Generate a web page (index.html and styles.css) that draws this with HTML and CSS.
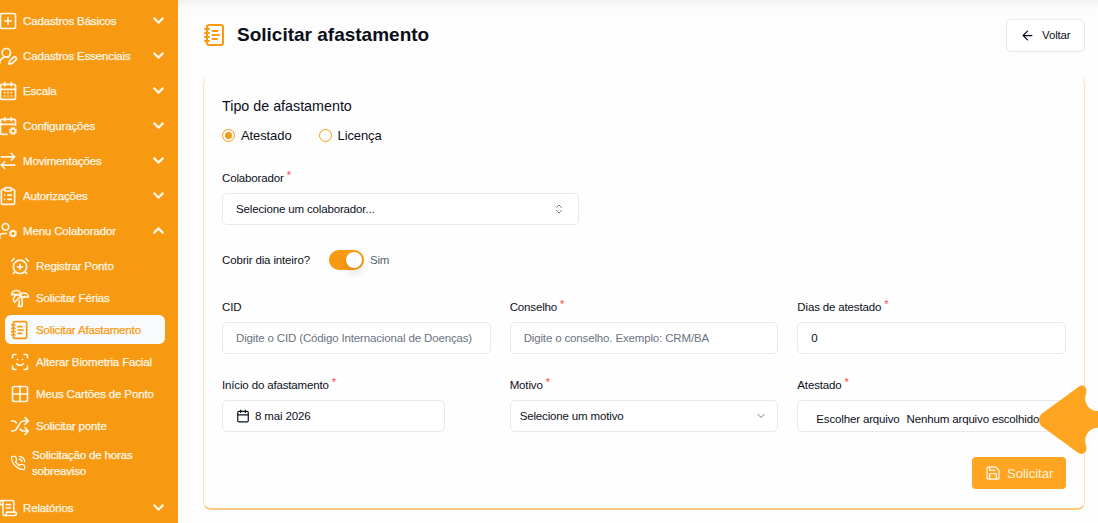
FILE: index.html
```html
<!DOCTYPE html>
<html lang="pt-BR">
<head>
  <meta charset="UTF-8" />
  <meta name="viewport" content="width=device-width, initial-scale=1.0"/>
  <title>Solicitar afastamento</title>
  <link rel="stylesheet" href="styles.css">
</head>
<body>

  <!-- Menu lateral -->
  <nav class="sidebar">
    <a class="menu-item">
      <svg class="icon" viewBox="0 0 24 24"><rect x="3" y="3" width="18" height="18" rx="2"/><path d="M8 12h8M12 8v8"/></svg>
      <span>Cadastros Básicos</span>
      <svg class="chevron" viewBox="0 0 24 24"><path d="m6 9 6 6 6-6"/></svg>
    </a>
    <a class="menu-item">
      <svg class="icon" viewBox="0 0 24 24"><path d="M2 21a8 8 0 0 1 10.821-7.487"/><path d="M21.378 16.626a1 1 0 0 0-3.004-3.004l-4.01 4.012a2 2 0 0 0-.506.854l-.837 2.87a.5.5 0 0 0 .62.62l2.87-.837a2 2 0 0 0 .854-.506z"/><circle cx="10" cy="8" r="5"/></svg>
      <span>Cadastros Essenciais</span>
      <svg class="chevron" viewBox="0 0 24 24"><path d="m6 9 6 6 6-6"/></svg>
    </a>
    <a class="menu-item">
      <svg class="icon" viewBox="0 0 24 24"><path d="M8 2v4M16 2v4"/><rect x="3" y="4" width="18" height="18" rx="2"/><path d="M3 10h18M8 14h.01M12 14h.01M16 14h.01M8 18h.01M12 18h.01M16 18h.01"/></svg>
      <span>Escala</span>
      <svg class="chevron" viewBox="0 0 24 24"><path d="m6 9 6 6 6-6"/></svg>
    </a>
    <a class="menu-item">
      <svg class="icon" viewBox="0 0 24 24"><path d="M8 2v4M16 2v4M3 10h18M21 11V6a2 2 0 0 0-2-2H5a2 2 0 0 0-2 2v14a2 2 0 0 0 2 2h6"/><circle cx="18" cy="18" r="3"/><path d="m15.2 16.9-.9-.4M15.2 19.1l-.9.3M16.9 15.2l-.4-.9M16.9 20.8l-.3.9M19.1 15.2l.3-.9M19.5 21.7l-.4-.9M20.8 16.9l.9-.4M21.7 19.5l-.9-.4"/></svg>
      <span>Configurações</span>
      <svg class="chevron" viewBox="0 0 24 24"><path d="m6 9 6 6 6-6"/></svg>
    </a>
    <a class="menu-item">
      <svg class="icon" viewBox="0 0 24 24"><path d="m16 3 4 4-4 4M20 7H4M8 21l-4-4 4-4M4 17h16"/></svg>
      <span>Movimentações</span>
      <svg class="chevron" viewBox="0 0 24 24"><path d="m6 9 6 6 6-6"/></svg>
    </a>
    <a class="menu-item">
      <svg class="icon" viewBox="0 0 24 24"><rect x="8" y="2" width="8" height="4" rx="1"/><path d="M16 4h2a2 2 0 0 1 2 2v14a2 2 0 0 1-2 2H6a2 2 0 0 1-2-2V6a2 2 0 0 1 2-2h2M12 11h4M12 16h4M8 11h.01M8 16h.01"/></svg>
      <span>Autorizações</span>
      <svg class="chevron" viewBox="0 0 24 24"><path d="m6 9 6 6 6-6"/></svg>
    </a>
    <a class="menu-item">
      <svg class="icon" viewBox="0 0 24 24"><circle cx="18" cy="15" r="3"/><circle cx="9" cy="7" r="4"/><path d="M10 15H6a4 4 0 0 0-4 4v2M21.7 16.4l-.9-.3M15.2 13.9l-.9-.3M16.6 18.7l.3-.9M19.1 12.2l.3-.9M19.6 18.7l-.4-1M16.8 12.3l-.4-1M14.3 16.6l1-.4M20.7 13.8l1-.4"/></svg>
      <span>Menu Colaborador</span>
      <svg class="chevron" viewBox="0 0 24 24"><path d="m18 15-6-6-6 6"/></svg>
    </a>

    <div class="submenu">
      <a class="submenu-item">
        <svg class="icon" viewBox="0 0 24 24"><circle cx="12" cy="13" r="8"/><path d="M5 3 2 6M22 6l-3-3M6.38 18.7 4 21M17.64 18.67 20 21M12 10v6M9 13h6"/></svg>
        <span>Registrar Ponto</span>
      </a>
      <a class="submenu-item">
        <svg class="icon" viewBox="0 0 24 24"><path d="M13 8c0-2.76-2.46-5-5.5-5S2 5.24 2 8h2l1-1 1 1h4"/><path d="M13 7.14A5.82 5.82 0 0 1 16.5 6c3.04 0 5.5 2.24 5.5 5h-3l-1-1-1 1h-3"/><path d="M5.89 9.71c-2.15 2.15-2.3 5.47-.35 7.43l4.24-4.25.7-.7.71-.71 2.12-2.12c-1.95-1.96-5.27-1.8-7.42.35"/><path d="M11 15.5c.5 2.5-.17 4.5-1 6.5h4c2-5.5-.5-12-1-14"/></svg>
        <span>Solicitar Férias</span>
      </a>
      <a class="submenu-item active">
        <svg class="icon" viewBox="0 0 24 24"><path d="M2 6h4M2 10h4M2 14h4M2 18h4"/><rect x="4" y="2" width="16" height="20" rx="2"/><path d="M9.5 8h5M9.5 12H16M9.5 16H14"/></svg>
        <span>Solicitar Afastamento</span>
      </a>
      <a class="submenu-item">
        <svg class="icon" viewBox="0 0 24 24"><path d="M3 7V5a2 2 0 0 1 2-2h2M17 3h2a2 2 0 0 1 2 2v2M21 17v2a2 2 0 0 1-2 2h-2M7 21H5a2 2 0 0 1-2-2v-2M8 14s1.5 2 4 2 4-2 4-2M9 9h.01M15 9h.01"/></svg>
        <span>Alterar Biometria Facial</span>
      </a>
      <a class="submenu-item">
        <svg class="icon" viewBox="0 0 24 24"><rect x="3" y="3" width="18" height="18" rx="2"/><path d="M12 3v18M3 12h18"/></svg>
        <span>Meus Cartões de Ponto</span>
      </a>
      <a class="submenu-item">
        <svg class="icon" viewBox="0 0 24 24"><path d="m18 14 4 4-4 4M18 2l4 4-4 4M2 18h1.973a4 4 0 0 0 3.3-1.7l5.454-8.6a4 4 0 0 1 3.3-1.7H22M2 6h1.972a4 4 0 0 1 3.6 2.2M22 18h-6.041a4 4 0 0 1-3.3-1.8l-.359-.45"/></svg>
        <span>Solicitar ponte</span>
      </a>
      <a class="submenu-item tall">
        <svg class="icon small" viewBox="0 0 24 24"><path d="M22 16.92v3a2 2 0 0 1-2.18 2 19.79 19.79 0 0 1-8.63-3.07 19.5 19.5 0 0 1-6-6 19.79 19.79 0 0 1-3.07-8.67A2 2 0 0 1 4.11 2h3a2 2 0 0 1 2 1.72 12.84 12.84 0 0 0 .7 2.81 2 2 0 0 1-.45 2.11L8.09 9.91a16 16 0 0 0 6 6l1.27-1.27a2 2 0 0 1 2.11-.45 12.84 12.84 0 0 0 2.81.7A2 2 0 0 1 22 16.92zM14.05 2a9 9 0 0 1 8 7.94M14.05 6A5 5 0 0 1 18 10"/></svg>
        <span>Solicitação de horas<br>sobreaviso</span>
      </a>
    </div>

    <a class="menu-item">
      <svg class="icon" viewBox="0 0 24 24"><path d="M15 12h-5M15 8h-5M19 17V5a2 2 0 0 0-2-2H4"/><path d="M8 21h12a2 2 0 0 0 2-2v-1a1 1 0 0 0-1-1H11a1 1 0 0 0-1 1v1a2 2 0 1 1-4 0V5a2 2 0 1 0-4 0v2a1 1 0 0 0 1 1h3"/></svg>
      <span>Relatórios</span>
      <svg class="chevron" viewBox="0 0 24 24"><path d="m6 9 6 6 6-6"/></svg>
    </a>
  </nav>

  <main>
    <header class="page-header">
      <svg class="title-icon" viewBox="0 0 24 24"><path d="M2 6h4M2 10h4M2 14h4M2 18h4"/><rect x="4" y="2" width="16" height="20" rx="2"/><path d="M9.5 8h5M9.5 12H16M9.5 16H14"/></svg>
      <h1>Solicitar afastamento</h1>
      <button class="back-button">
        <svg viewBox="0 0 24 24"><path d="m12 19-7-7 7-7M19 12H5"/></svg>
        <span>Voltar</span>
      </button>
    </header>

    <form class="card">
      <h2>Tipo de afastamento</h2>
      <div class="radio-group">
        <label class="radio"><i class="dot checked"></i><span>Atestado</span></label>
        <label class="radio"><i class="dot"></i><span>Licença</span></label>
      </div>

      <div class="field employee">
        <label class="label"><span>Colaborador</span><sup>*</sup></label>
        <div class="control">
          <span>Selecione um colaborador...</span>
          <svg class="arrow" viewBox="0 0 24 24"><path d="m7 15 5 5 5-5M7 9l5-5 5 5"/></svg>
        </div>
      </div>

      <div class="switch-row">
        <span>Cobrir dia inteiro?</span>
        <i class="switch"></i>
        <span class="switch-value">Sim</span>
      </div>

      <div class="grid">
        <div class="field">
          <label class="label"><span>CID</span></label>
          <div class="control placeholder"><span>Digite o CID (Código Internacional de Doenças)</span></div>
        </div>
        <div class="field">
          <label class="label"><span>Conselho</span><sup>*</sup></label>
          <div class="control placeholder"><span>Digite o conselho. Exemplo: CRM/BA</span></div>
        </div>
        <div class="field">
          <label class="label"><span>Dias de atestado</span><sup>*</sup></label>
          <div class="control"><span>0</span></div>
        </div>
        <div class="field">
          <label class="label"><span>Início do afastamento</span><sup>*</sup></label>
          <div class="control date">
            <svg viewBox="0 0 24 24"><path d="M8 2v4M16 2v4"/><rect x="3" y="4" width="18" height="18" rx="2"/><path d="M3 10h18"/></svg>
            <span>8 mai 2026</span>
          </div>
        </div>
        <div class="field">
          <label class="label"><span>Motivo</span><sup>*</sup></label>
          <div class="control select">
            <span>Selecione um motivo</span>
            <svg class="arrow" viewBox="0 0 24 24"><path d="m6 9 6 6 6-6"/></svg>
          </div>
        </div>
        <div class="field">
          <label class="label"><span>Atestado</span><sup>*</sup></label>
          <div class="control file">
            <span>Escolher arquivo</span>
            <span class="file-name">Nenhum arquivo escolhido</span>
          </div>
        </div>
      </div>

      <div class="actions">
        <button type="button" class="submit-button">
          <svg viewBox="0 0 24 24"><path d="M15.2 3a2 2 0 0 1 1.4.6l3.8 3.8a2 2 0 0 1 .6 1.4V19a2 2 0 0 1-2 2H5a2 2 0 0 1-2-2V5a2 2 0 0 1 2-2z"/><path d="M17 21v-7a1 1 0 0 0-1-1H8a1 1 0 0 0-1 1v7M7 3v4a1 1 0 0 0 1 1h7"/></svg>
          <span>Solicitar</span>
        </button>
      </div>
    </form>
  </main>

  <!-- Botão flutuante na borda direita -->
  <svg class="floating-tab" viewBox="0 0 60 70" preserveAspectRatio="none"><path d="M3 29 40 3C45-1 50 3 48 9C45 18 51 26 60 26V42C51 42 45 50 48 59C50 65 45 69 40 66L3 40Q-1 34.5 3 29Z"/></svg>

</body>
</html>
```
FILE: styles.css
```css
:root {
  --primary-color: #f79a12;
  --button-color: #ffa521;
  --border-color: #e7e8ec;
  --text-color: #0c0f1a;
}
* {
  box-sizing: border-box;
}
body {
  margin: 0;
  height: 523px;
  display: flex;
  overflow: hidden;
  position: relative;
  background: #fdfdfd;
  color: var(--text-color);
  font-family: "Liberation Sans", Arial, sans-serif;
  font-size: 11.5px;
  letter-spacing: -0.15px;
}
svg {
  fill: none;
  stroke: currentColor;
  stroke-width: 2;
  stroke-linecap: round;
  stroke-linejoin: round;
  flex: none;
}
span {
  white-space: nowrap;
}
button {
  font-family: inherit;
  letter-spacing: inherit;
}

/* menu lateral */
.sidebar {
  width: 178px;
  flex: none;
  padding-top: 3px;
  background: var(--primary-color);
  color: #fff6e8;
  -webkit-text-stroke: 0.25px;
}
.menu-item {
  display: flex;
  align-items: center;
  height: 35px;
  padding-right: 11px;
}
.menu-item .icon {
  width: 20px;
  height: 20px;
  margin: 1px 5px 0 -2px;
}
.chevron {
  width: 17px;
  height: 17px;
  margin-left: auto;
  stroke-width: 3;
}
.submenu {
  padding: 2px 13px 6px 5px;
}
.submenu-item {
  display: flex;
  align-items: center;
  height: 32px;
  padding-left: 5px;
}
.submenu-item .icon {
  width: 20px;
  height: 20px;
  margin-right: 6px;
}
.submenu-item.active {
  height: 29px;
  margin: 1px 0 2px;
  border-radius: 6px;
  background: #f9fafb;
  color: var(--primary-color);
}
.submenu-item.tall {
  height: 42px;
  line-height: 16px;
}
.submenu-item .icon.small {
  width: 16px;
  height: 16px;
  margin-right: 6px;
}

/* conteúdo */
main {
  flex: 1;
  min-width: 0;
  padding: 17px 13px 0 25px;
  background: linear-gradient(#f1f1f1, #fdfdfd 9px);
}
.page-header {
  display: flex;
  align-items: center;
  height: 36px;
}
.title-icon {
  width: 24px;
  height: 24px;
  color: var(--primary-color);
}
h1 {
  margin: 0 0 0 10px;
  font-size: 19px;
  letter-spacing: 0;
}
.back-button {
  display: flex;
  align-items: center;
  width: 79px;
  height: 33px;
  margin-left: auto;
  padding: 0 0 0 13px;
  border: 1px solid var(--border-color);
  border-radius: 5px;
  background: #fff;
  color: var(--text-color);
  font-size: 11.5px;
}
.back-button svg {
  width: 15px;
  height: 15px;
  margin-right: 7px;
}
.card {
  height: 434px;
  margin-top: 23px;
  padding: 20px 18px 0 18px;
  border: 1px solid #fde3bb;
  border-top-color: transparent;
  border-bottom: 2px solid #fbc980;
  border-radius: 8px;
  background: #fefefe;
}
h2 {
  margin: 0;
  font-size: 14.3px;
  font-weight: normal;
  line-height: 18px;
  letter-spacing: 0;
}
.radio-group {
  display: flex;
  gap: 27px;
  margin-top: 12px;
}
.radio {
  display: flex;
  align-items: center;
  gap: 6px;
  height: 17px;
  font-size: 13px;
  letter-spacing: -0.1px;
}
.dot {
  width: 13px;
  height: 13px;
  border: 1px solid var(--primary-color);
  border-radius: 50%;
}
.dot.checked {
  padding: 2px;
  background: var(--primary-color) content-box;
}
.label {
  display: flex;
  height: 14px;
  line-height: 14px;
}
.label sup {
  margin-left: 3px;
  color: #f44;
  font-size: 11px;
  line-height: 8px;
}
.control {
  display: flex;
  align-items: center;
  height: 32px;
  margin-top: 8px;
  padding: 0 13px;
  border: 1px solid var(--border-color);
  border-radius: 5px;
  background: #fff;
}
.placeholder {
  color: #6b7280;
}
.arrow {
  width: 12px;
  height: 12px;
  margin-left: auto;
  color: #777;
}
.employee {
  width: 357px;
  margin-top: 27px;
}
.switch-row {
  display: flex;
  align-items: center;
  height: 20px;
  margin-top: 25px;
}
.switch {
  width: 35px;
  height: 20px;
  margin: 0 6px 0 19px;
  padding: 2px 2px 2px 17px;
  border-radius: 10px;
  background: var(--primary-color);
}
.switch::after {
  content: "";
  display: block;
  width: 16px;
  height: 16px;
  border-radius: 50%;
  background: #fff;
  box-shadow: 0 6px 8px rgba(0, 0, 0, 0.1);
}
.switch-value {
  color: #566273;
}
.grid {
  display: grid;
  grid-template-columns: repeat(3, minmax(0, 1fr));
  gap: 24px 19px;
  margin-top: 30px;
}
.date {
  width: 223px;
}
.date svg {
  width: 14px;
  height: 14px;
  margin-right: 5px;
}
.control.select {
  padding-left: 9px;
  padding-right: 10px;
}
.control.file {
  padding: 6px 0 0 18px;
}
.file-name {
  margin-left: 7px;
}
.actions {
  display: flex;
  justify-content: flex-end;
  margin-top: 25px;
}
.submit-button {
  display: flex;
  align-items: center;
  width: 94px;
  height: 32px;
  padding: 0 0 0 13px;
  border: 0;
  border-radius: 4px;
  background: var(--button-color);
  color: #fff3df;
  font-size: 13px;
  letter-spacing: 0;
}
.submit-button svg {
  width: 16px;
  height: 16px;
  margin-right: 6px;
}
.floating-tab {
  position: absolute;
  right: 0;
  top: 384px;
  width: 60px;
  height: 73px;
  fill: var(--button-color);
  stroke: none;
}
```
